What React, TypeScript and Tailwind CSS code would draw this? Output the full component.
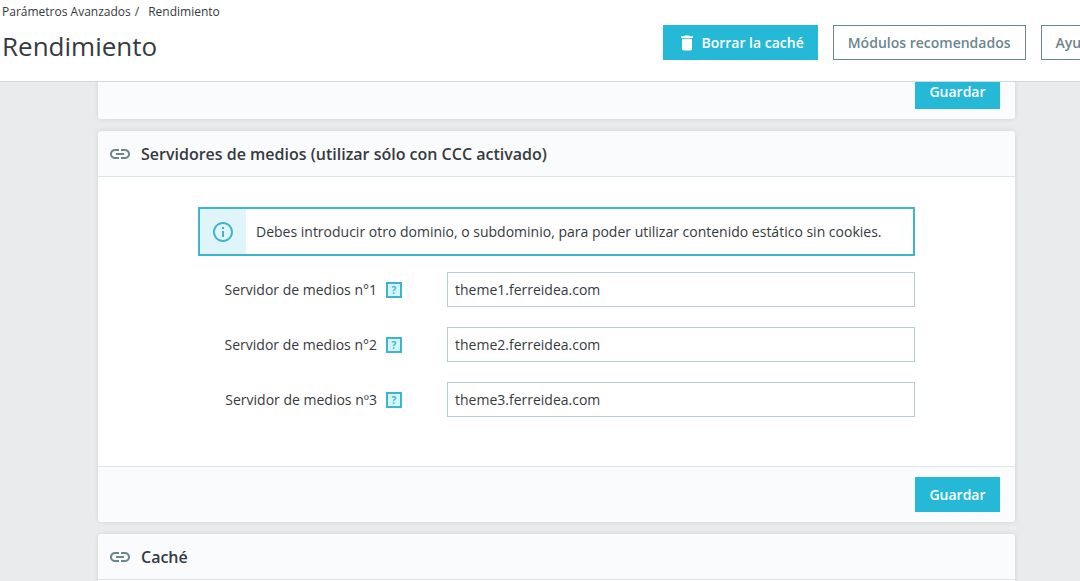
import type { ReactNode } from 'react';
import { MdDelete, MdInfoOutline, MdLink } from 'react-icons/md';

const servers = [
    { id: 'server-1', label: 'Servidor de medios n°1', value: 'theme1.ferreidea.com' },
    { id: 'server-2', label: 'Servidor de medios n°2', value: 'theme2.ferreidea.com' },
    { id: 'server-3', label: 'Servidor de medios nº3', value: 'theme3.ferreidea.com' },
];

const Card = ({ children }: { children: ReactNode }) => (
    <section className="overflow-hidden rounded bg-white shadow-[0_0_5px_rgba(0,0,0,0.1)]">{children}</section>
);

const CardHeader = ({ title }: { title: string }) => (
    <div className="flex h-[46px] items-center gap-[9px] border-b border-[#dbe6e9] bg-[#fafbfc] px-2.5">
        <MdLink className="size-6 text-[#6c868e]" />
        <h2 className="text-base font-semibold">{title}</h2>
    </div>
);

const CardFooter = () => (
    <div className="flex justify-end border-t border-[#dbe6e9] bg-[#fafbfc] px-[15px] py-2.5">
        <button type="submit" className="h-[35px] w-[85px] bg-[#25b9d7] font-semibold text-white">
            Guardar
        </button>
    </div>
);

const App = () => {
    return (
        <div className="h-screen overflow-hidden bg-[#eaebec] font-['Open_Sans',sans-serif] text-sm text-[#363a41]">
            <header className="fixed inset-x-0 top-0 z-10 flex justify-between overflow-hidden border-b border-[#d3d8db] bg-white pb-[17px] pl-0.5">
                <div>
                    <nav className="flex gap-[9px] pt-1 text-xs leading-4">
                        <span className="flex gap-1">
                            <a href="#avanzados">Parámetros Avanzados</a>
                            <span>/</span>
                        </span>
                        <a href="#rendimiento">Rendimiento</a>
                    </nav>
                    <h1 className="pt-2 text-[26px] leading-9">Rendimiento</h1>
                </div>
                <div className="-mr-[33px] flex shrink-0 gap-[15px] pt-[25px] font-semibold">
                    <button type="button" className="flex h-[35px] items-center gap-1 bg-[#25b9d7] px-3.5 text-white">
                        <MdDelete className="size-5" />
                        Borrar la caché
                    </button>
                    <button type="button" className="h-[35px] border border-[#6c868e] px-3.5 text-[#6c868e]">
                        Módulos recomendados
                    </button>
                    <button type="button" className="h-[35px] border border-[#6c868e] px-3.5 text-[#6c868e]">
                        Ayuda
                    </button>
                </div>
            </header>

            <main className="flex flex-col gap-3 pt-[63px] pr-[65px] pl-[98px]">
                <Card>
                    <CardFooter />
                </Card>

                <Card>
                    <CardHeader title="Servidores de medios (utilizar sólo con CCC activado)" />
                    <form className="px-[100px] pt-[30px] pb-[49px]">
                        <div className="mb-4 flex h-[49px] border-2 border-[#3fb5cd]">
                            <div className="flex w-[46px] items-center justify-center bg-[#dff5f9]">
                                <MdInfoOutline className="size-6 text-[#3fb5cd]" />
                            </div>
                            <p className="self-center pl-2.5">
                                Debes introducir otro dominio, o subdominio, para poder utilizar contenido estático sin cookies.
                            </p>
                        </div>
                        <div className="flex flex-col gap-5">
                            {servers.map((server) => (
                                <div key={server.id} className="grid grid-cols-[204px_1fr] items-center gap-[45px]">
                                    <div className="flex items-center justify-end gap-[9px]">
                                        <label htmlFor={server.id}>{server.label}</label>
                                        <button
                                            type="button"
                                            aria-label="Ayuda"
                                            className="flex size-4 items-center justify-center border-2 border-[#3fb5cd] bg-[#d3f6fc] text-[10px] leading-3 font-bold text-[#4ab3c9]"
                                        >
                                            ?
                                        </button>
                                    </div>
                                    <input
                                        id={server.id}
                                        type="text"
                                        defaultValue={server.value}
                                        className="h-[35px] w-full border border-[#bbcdd2] bg-white px-[7px] focus:border-[#25b9d7] focus:outline-none"
                                    />
                                </div>
                            ))}
                        </div>
                    </form>
                    <CardFooter />
                </Card>

                <Card>
                    <CardHeader title="Caché" />
                    <div className="h-40" />
                </Card>
            </main>
        </div>
    );
};

export default App;
